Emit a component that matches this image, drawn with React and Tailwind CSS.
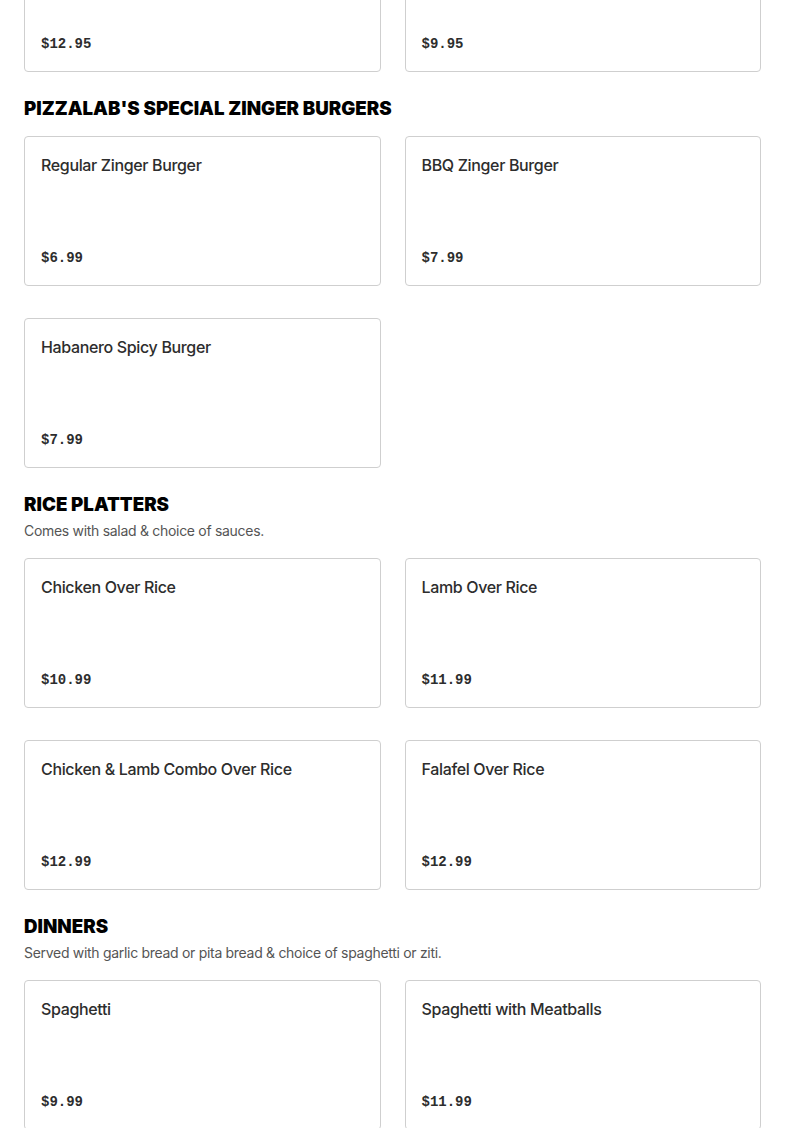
const sections = [
  {
    title: "PIZZALAB'S SPECIAL ZINGER BURGERS",
    items: [
      { name: 'Regular Zinger Burger', price: '$6.99' },
      { name: 'BBQ Zinger Burger', price: '$7.99' },
      { name: 'Habanero Spicy Burger', price: '$7.99' },
    ],
  },
  {
    title: 'RICE PLATTERS',
    note: 'Comes with salad & choice of sauces.',
    items: [
      { name: 'Chicken Over Rice', price: '$10.99' },
      { name: 'Lamb Over Rice', price: '$11.99' },
      { name: 'Chicken & Lamb Combo Over Rice', price: '$12.99' },
      { name: 'Falafel Over Rice', price: '$12.99' },
    ],
  },
  {
    title: 'DINNERS',
    note: 'Served with garlic bread or pita bread & choice of spaghetti or ziti.',
    items: [
      { name: 'Spaghetti', price: '$9.99' },
      { name: 'Spaghetti with Meatballs', price: '$11.99' },
    ],
  },
];

function ItemCard({ name, price }) {
  return (
    <div className="h-[150px] flex flex-col justify-between border border-[#cfcfcf] rounded-[4px] px-4 pt-4 pb-[15px] bg-white">
      <h3 className="text-[16px] leading-6 font-medium text-[#2d2d2d] font-['Inter',sans-serif] tracking-[-0.35px]">{name}</h3>
      <span className="text-[14px] leading-6 font-bold text-[#2d2d2d] font-['Liberation_Mono',monospace]">{price}</span>
    </div>
  );
}

export default function App() {
  return (
    <div className="min-h-screen bg-white px-6 overflow-hidden">
      {/* cut-off row from the previous section */}
      <div className="grid grid-cols-2 gap-x-6 -mt-[78px]">
        <ItemCard name="" price="$12.95" />
        <ItemCard name="" price="$9.95" />
      </div>

      {sections.map((section) => (
        <section key={section.title} className="mt-6">
          <h2 className="text-[18.7px] leading-[26px] font-black text-black font-['Inter',sans-serif]">
            {section.title}
          </h2>
          {section.note && (
            <p className="mt-[3px] text-[14px] leading-5 text-[#555] font-['Inter',sans-serif] tracking-[-0.3px]">{section.note}</p>
          )}
          <div className={section.note ? 'mt-[17px] grid grid-cols-2 gap-x-6 gap-y-8' : 'mt-[14px] grid grid-cols-2 gap-x-6 gap-y-8'}>
            {section.items.map((item) => (
              <ItemCard key={item.name} {...item} />
            ))}
          </div>
        </section>
      ))}
    </div>
  );
}
